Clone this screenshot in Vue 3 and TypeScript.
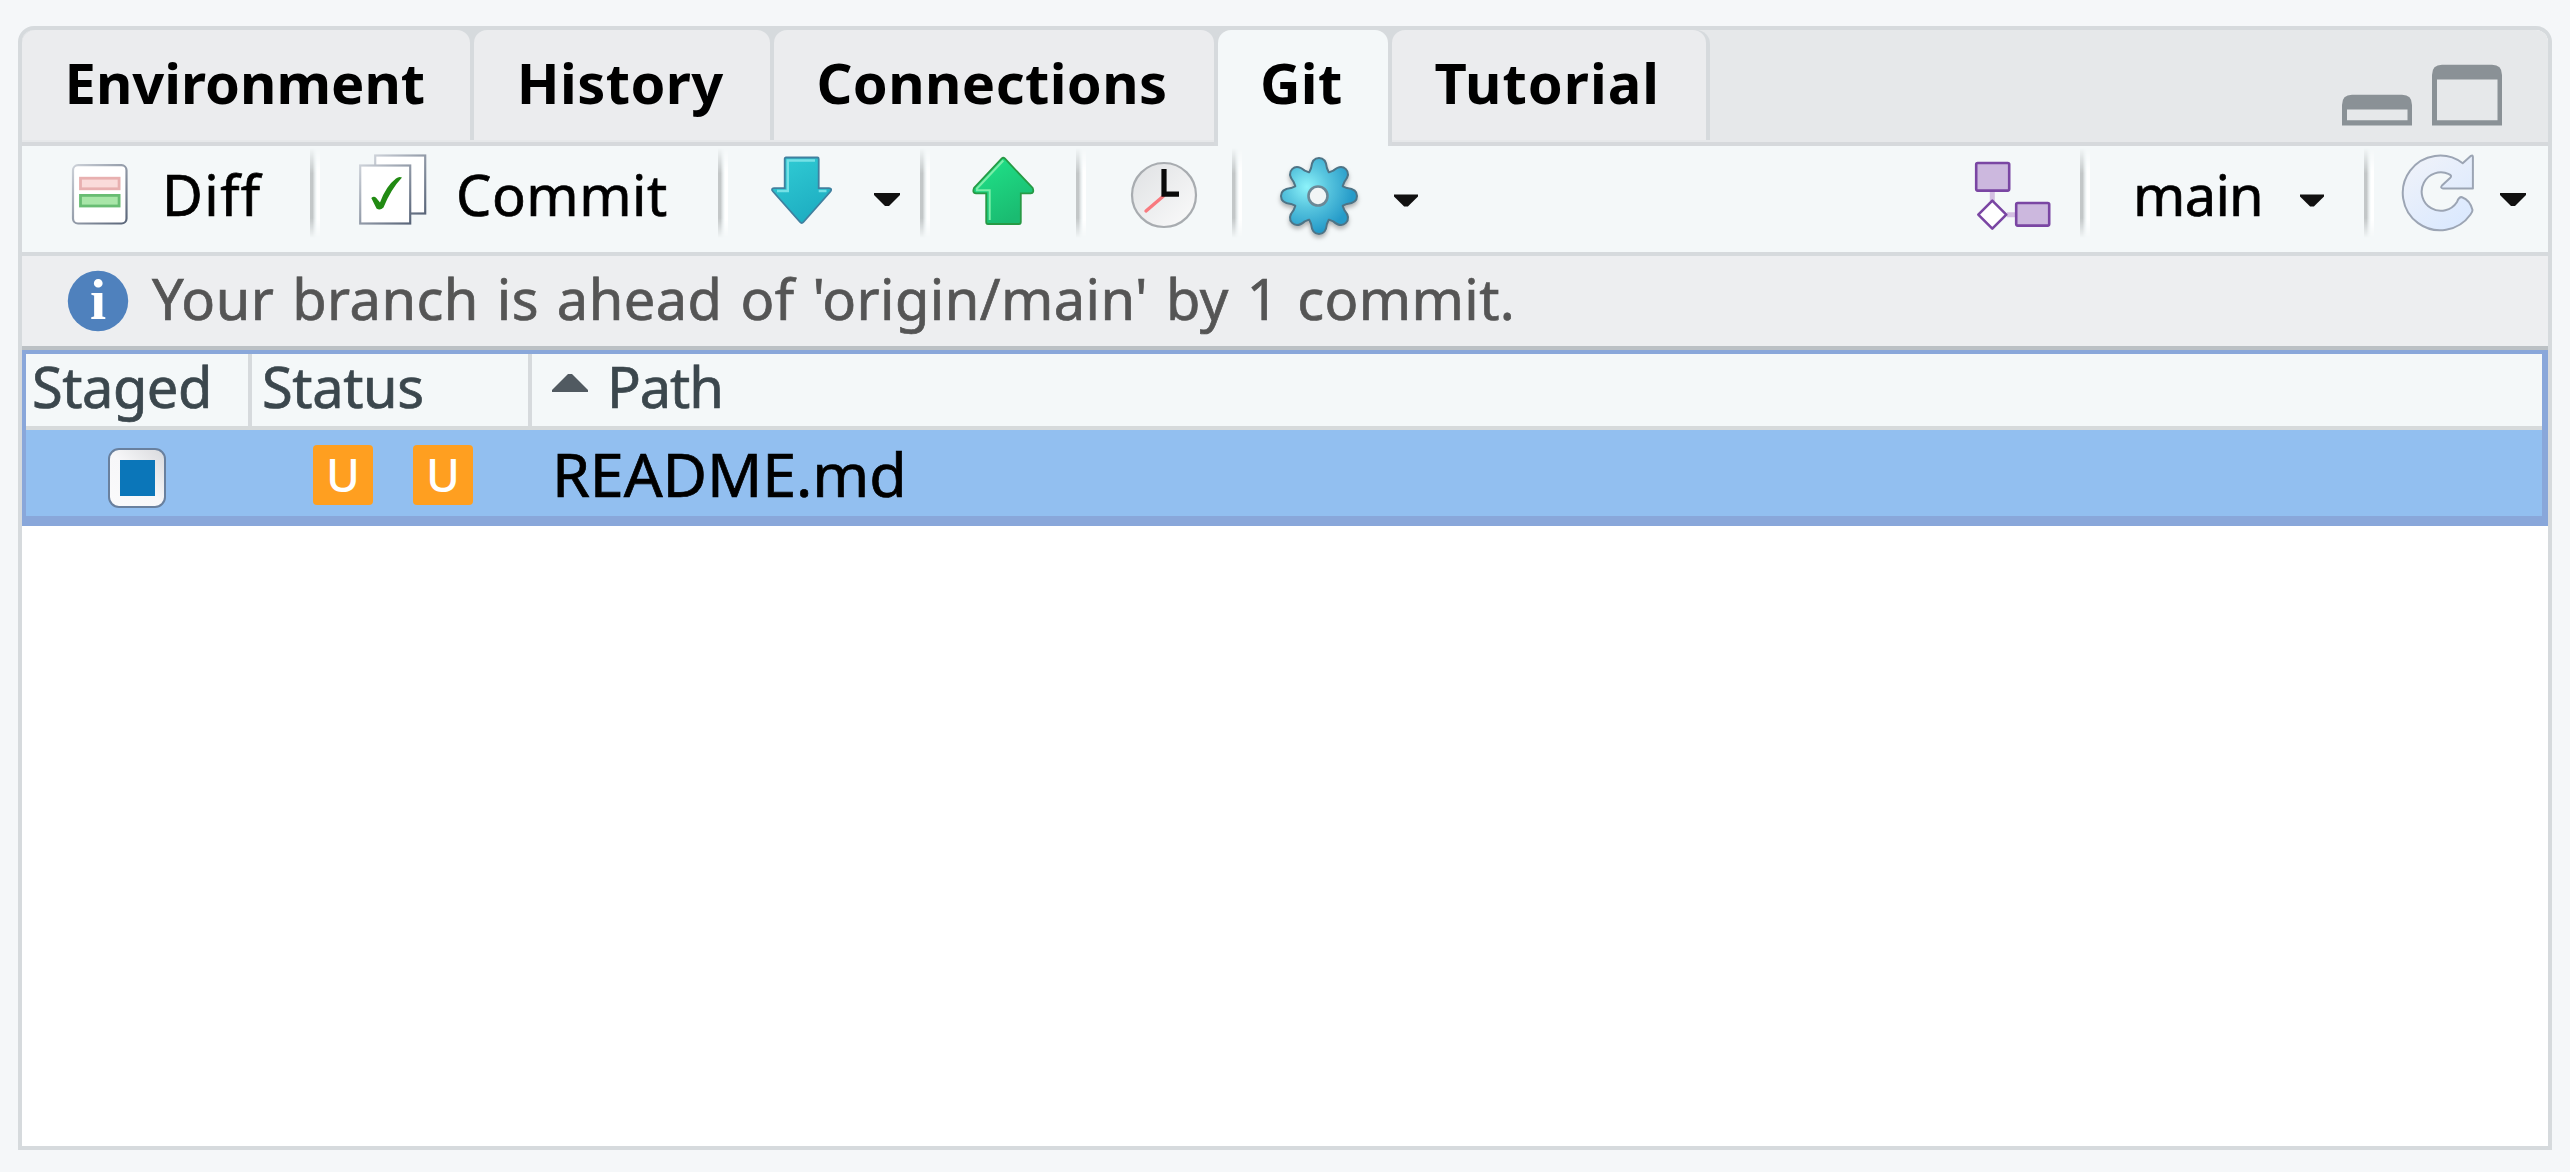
<script setup lang="ts">
interface Tab {
  label: string
  width: number
  indent: number
  spacing: number
  active?: boolean
}

interface ChangedFile {
  path: string
  status: string[]
}

const tabs: Tab[] = [
  { label: 'Environment', width: 448, indent: 42.6, spacing: 0 },
  { label: 'History', width: 296, indent: 42.8, spacing: 0.4 },
  { label: 'Connections', width: 440, indent: 42.5, spacing: 0.4 },
  { label: 'Git', width: 170, indent: 42, spacing: 0.3, active: true },
  { label: 'Tutorial', width: 314, indent: 42.4, spacing: 1.05 },
]

const files: ChangedFile[] = [{ path: 'README.md', status: ['U', 'U'] }]

// Outline of the eight-toothed gear, centred on the origin.
function gearPath(): string {
  const tooth: [number, number][] = [
    [-9.7, -23.8], [-7.9, -28], [-7, -38], [0, -38], [7, -38], [7.9, -28], [9.7, -23.8],
  ]
  let d = ''
  for (let i = 0; i < 8; i++) {
    const a = (i * Math.PI) / 4
    const p = tooth.map(([x, y]) => {
      const rx = x * Math.cos(a) - y * Math.sin(a)
      const ry = x * Math.sin(a) + y * Math.cos(a)
      return `${rx.toFixed(2)} ${ry.toFixed(2)}`
    })
    d += `${i === 0 ? 'M' : 'L'}${p[0]} L${p[1]} Q${p[2]} ${p[3]} Q${p[4]} ${p[5]} L${p[6]} `
  }
  return d + 'Z'
}
const gear = gearPath()
</script>

<template>
  <div class="page">
    <section class="panel">
      <header class="tabbar">
        <nav class="tabs">
          <div
            v-for="t in tabs"
            :key="t.label"
            class="tab"
            :class="{ active: t.active }"
            :style="{ width: t.width + 'px', paddingLeft: t.indent + 'px', letterSpacing: t.spacing + 'px' }"
          >{{ t.label }}</div>
        </nav>
        <div class="window-buttons">
          <svg width="70" height="32" viewBox="0 0 70 32">
            <path fill="#8a9196" fill-rule="evenodd" d="M0 31.5V11Q0 .8 10 .8H60Q70 .8 70 11V31.5ZM5 15.6V26.2H65.5V15.6Z" />
          </svg>
          <svg width="70" height="62" viewBox="0 0 70 62">
            <path fill="#8a9196" fill-rule="evenodd" d="M0 61.5V11Q0 .8 10 .8H60Q70 .8 70 11V61.5ZM5 15.6V56.2H65.5V15.6Z" />
          </svg>
        </div>
      </header>

      <div class="toolbar">
        <div class="cell diff">
          <svg class="icon" width="60" height="66" viewBox="70 161 60 66">
            <defs>
              <linearGradient id="page-edge" x1="0" y1="0" x2="1" y2="1">
                <stop offset="0" stop-color="#ccd1d8" />
                <stop offset="1" stop-color="#596579" />
              </linearGradient>
            </defs>
            <rect x="73" y="165.2" width="53.5" height="58.3" rx="5" fill="#fff" stroke="url(#page-edge)" stroke-width="2.2" />
            <rect x="80.5" y="178.2" width="38.6" height="10.6" fill="#fadbda" stroke="#e8b0b0" stroke-width="2.8" />
            <rect x="80.5" y="195.4" width="38.6" height="10.6" fill="#a8e6a8" stroke="#68bd73" stroke-width="2.8" />
          </svg>
          <span class="label">Diff</span>
        </div>
        <i class="sep" />
        <div class="cell commit">
          <svg class="icon" width="72" height="76" viewBox="357 152 72 76">
            <rect x="375.2" y="155.5" width="50" height="58" fill="#fff" stroke="url(#page-edge)" stroke-width="2.2" />
            <rect x="360.2" y="165.5" width="50" height="58" fill="#fff" stroke="url(#page-edge)" stroke-width="2.2" />
            <path d="M371.3 198Q374 195.5 376.3 198L380 202.5Q386 186 396 178.5Q399 176 402 177.5Q391 189 383.5 207.5Q380 211 376.5 208.5Z" fill="#218a12" />
          </svg>
          <span class="label">Commit</span>
        </div>
        <i class="sep" />
        <div class="cell pull">
          <svg class="icon" width="68" height="76" viewBox="0 0 68 76">
            <defs>
              <linearGradient id="pull" x1="0" y1="0" x2=".5" y2="1">
                <stop offset="0" stop-color="#31cdd5" />
                <stop offset="1" stop-color="#1eaec2" />
              </linearGradient>
            </defs>
            <path d="M18 5.5H49.5Q50.7 5.5 50.7 7V36.2H61Q64.5 36.5 62.5 39.5L35.5 70Q33.7 72 32 70L5 39.5Q2.5 36.5 6 36.2H16.7V7Q16.7 5.5 18 5.5Z" fill="url(#pull)" stroke="#40809f" stroke-width="1.8" />
            <path d="M47 8.5H19.8V39H9M50.7 39H58.5" fill="none" stroke="#75e1e6" stroke-width="2.4" />
          </svg>
          <svg class="caret" width="26" height="14" viewBox="0 0 26 14"><path d="M0 0H26V2L15 13H11L0 2Z" fill="#111" /></svg>
        </div>
        <i class="sep" />
        <div class="cell push">
          <svg class="icon" width="68" height="76" viewBox="0 0 68 76">
            <defs>
              <linearGradient id="push" x1="0" y1="0" x2=".5" y2="1">
                <stop offset="0" stop-color="#20e58a" />
                <stop offset="1" stop-color="#1abb71" />
              </linearGradient>
            </defs>
            <path d="M31.8 6.5Q33.3 5 34.8 6.5L62.7 36Q64.5 41 60.7 41.3H50.8V70Q50.8 72 49 72H18Q16.2 72 16.2 70V41.3H6Q2 41 4 36Z" fill="url(#push)" stroke="#279a45" stroke-width="1.8" />
            <path d="M33.3 8.5L7 36.5V38.3H19.7V68" fill="none" stroke="#7beea9" stroke-width="2" />
          </svg>
        </div>
        <i class="sep" />
        <div class="cell history">
          <svg class="icon" width="70" height="70" viewBox="-35 -35 70 70">
            <defs>
              <linearGradient id="clock" x1="0" y1="0" x2="1" y2="1">
                <stop offset="0" stop-color="#dfe1e3" />
                <stop offset="1" stop-color="#fbfbfb" />
              </linearGradient>
            </defs>
            <circle r="32" fill="url(#clock)" stroke="#a8acb0" stroke-width="2.2" />
            <path d="M-.5 1L-18 16" stroke="#f87a7f" stroke-width="3.4" stroke-linecap="round" />
            <path d="M0-26V-.8H15" fill="none" stroke="#0a0a0a" stroke-width="5.2" />
          </svg>
        </div>
        <i class="sep" />
        <div class="cell more">
          <svg class="icon" width="90" height="92" viewBox="-45 -43 90 92">
            <defs>
              <radialGradient id="gear" gradientUnits="userSpaceOnUse" cx="-12" cy="-9" r="46">
                <stop offset="0" stop-color="#8df3fa" />
                <stop offset=".45" stop-color="#59c6df" />
                <stop offset="1" stop-color="#269bc9" />
              </radialGradient>
            </defs>
            <g class="gear">
              <path :d="gear" fill="url(#gear)" stroke="#4e7486" stroke-width="2" stroke-linejoin="round" />
            </g>
            <circle cx="-1" r="9.5" fill="#f2f5f6" stroke="#6c8896" stroke-width="2.6" />
          </svg>
          <svg class="caret" width="24" height="14" viewBox="0 0 26 14"><path d="M0 0H26V2L15 13H11L0 2Z" fill="#111" /></svg>
        </div>
        <div class="cell branch-new">
          <svg class="icon" width="84" height="78" viewBox="0 0 84 78">
            <path d="M22.3 36V46M37 59.7H46" stroke="#d3bfe2" stroke-width="5" />
            <g stroke="#7a46a3" stroke-width="2.6">
              <rect x="6.2" y="8" width="33" height="27.6" rx="1.5" fill="#ccb8de" />
              <rect x="46.2" y="48" width="33" height="22.6" rx="1.5" fill="#ccb8de" />
              <path d="M22.3 45.7L36.3 59.7L22.3 73.7L8.3 59.7Z" fill="#fff" stroke-linejoin="round" />
            </g>
          </svg>
        </div>
        <i class="sep" />
        <div class="cell branch">
          <span class="label">main</span>
          <svg class="caret" width="24" height="14" viewBox="0 0 26 14"><path d="M0 0H26V2L15 13H11L0 2Z" fill="#111" /></svg>
        </div>
        <i class="sep" />
        <div class="cell refresh">
          <svg class="icon" width="76" height="84" viewBox="0 0 76 84">
            <defs>
              <linearGradient id="refresh" x1="0" y1="0" x2=".7" y2="1">
                <stop offset="0" stop-color="#f1f3f9" />
                <stop offset="1" stop-color="#dbe9fe" />
              </linearGradient>
            </defs>
            <path d="M61.7 13.3L70 5.8Q71.9 4.6 71.9 7V38.4H42Q39 38 41 35.5L49 28Q51.5 25.5 48 24.2A19.2 19.2 0 1 0 56 52Q58 46.5 61 47.2Q69 50 71.5 60Q71.5 62 69.5 64.5A37.3 37.3 0 1 1 61.7 13.3Z" fill="url(#refresh)" stroke="#9ca5b4" stroke-width="2" stroke-linejoin="round" />
          </svg>
          <svg class="caret" width="26" height="14" viewBox="0 0 26 14"><path d="M0 0H26V2L15 13H11L0 2Z" fill="#111" /></svg>
        </div>
      </div>

      <div class="info">
        <svg width="62" height="62" viewBox="-31 -31 62 62">
          <circle r="30.2" fill="#4f81bd" />
          <text class="info-mark" y="17.5" text-anchor="middle">i</text>
        </svg>
        <span>Your branch is ahead of 'origin/main' by 1 commit.</span>
      </div>

      <div class="grid">
        <div class="row head">
          <div class="col staged">Staged</div>
          <div class="col status">Status</div>
          <div class="col path">
            <svg width="36" height="18" viewBox="0 0 36 18"><path d="M16 0H20L36 16V18H0V16Z" fill="#515a61" /></svg>
            <span>Path</span>
          </div>
        </div>
        <div v-for="f in files" :key="f.path" class="row file">
          <div class="check"><i /></div>
          <div class="badges"><b v-for="(s, i) in f.status" :key="i">{{ s }}</b></div>
          <span class="name">{{ f.path }}</span>
        </div>
      </div>
    </section>
  </div>
</template>

<style>
body { margin: 0; background: #f5f7f9; }
</style>

<style scoped>
* { box-sizing: border-box; }
.page {
  width: 2570px;
  height: 1172px;
  padding: 26px 18px 22px;
  overflow: hidden;
  background: #f5f7f9;
  font: 400 56px/76px "Noto Sans", "Open Sans", sans-serif;
  color: #000;
  white-space: nowrap;
}
svg { display: block; flex: none; }
.panel {
  width: 2534px;
  height: 1124px;
  border: 4px solid #d6dadd;
  border-radius: 16px 16px 0 0;
  background: #fff;
  display: flex;
  flex-direction: column;
}
.tabbar {
  height: 116px;
  flex: none;
  display: flex;
  justify-content: space-between;
  background: #e6e8ea;
  border-bottom: 4px solid #d6d9dc;
  border-radius: 12px 12px 0 0;
}
.tabs {
  display: flex;
  gap: 4px;
  height: 110px;
  padding-right: 4px;
  background: #d6dadd;
  border-radius: 12px 14px 0 0;
}
.tab {
  height: 110px;
  padding-top: 14px;
  background: #ebecee;
  border-radius: 13px 13px 0 0;
  font-weight: 700;
}
.tab.active {
  height: 116px;
  background: #f4f8f9;
  box-shadow: -4px 0 #d6dadd, 4px 0 #d6dadd;
}
.window-buttons {
  display: flex;
  align-items: flex-end;
  gap: 20px;
  height: 96px;
  padding-right: 46px;
}
.toolbar {
  height: 110px;
  flex: none;
  display: flex;
  background: #f4f8f9;
  border-bottom: 4px solid #d6dadd;
}
.cell { display: flex; align-items: flex-start; flex: none; }
.label { margin-top: 10px; }
.label, .info span, .head, .name { -webkit-text-stroke: .7px currentColor; }
.sep {
  flex: none;
  width: 10px;
  height: 90px;
  margin-top: 2px;
  background: linear-gradient(90deg, #c3c7c8 0 25%, #e2e6e7 45%, #f4f8f9 60%, #fff 72% 100%);
  -webkit-mask-image: linear-gradient(transparent, #000 28%, #000 78%, transparent);
  mask-image: linear-gradient(transparent, #000 28%, #000 78%, transparent);
}
.caret { margin-top: 47px; }
.diff { width: 288px; padding-left: 48px; }
.diff .icon { margin-top: 15px; }
.diff .label { margin-left: 32px; letter-spacing: 1.4px; }
.commit { width: 398px; padding-left: 37px; }
.commit .icon { margin-top: 6px; }
.commit .label { margin-left: 27px; letter-spacing: .5px; }
.pull { width: 192px; padding-left: 40px; }
.pull .icon, .push .icon { margin-top: 6px; }
.pull .caret { margin-left: 38px; }
.push { width: 146px; padding-left: 40px; }
.history { width: 146px; padding-left: 43px; }
.history .icon { margin-top: 14px; }
.more { flex: 1; padding-left: 32px; }
.more .icon { margin-top: 7px; }
.more .caret { margin-left: 30px; margin-top: 48px; }
.gear { filter: drop-shadow(0 3px 2px rgba(0, 0, 0, .28)); }
.branch-new { width: 110px; }
.branch-new .icon { margin-top: 9px; }
.branch { width: 274px; padding-left: 43px; }
.branch .label { width: 167px; letter-spacing: -.7px; }
.branch .caret { margin-top: 48px; }
.refresh { width: 174px; padding-left: 27px; }
.refresh .icon { margin-top: 4px; }
.refresh .caret { margin-left: 23px; }
.info {
  height: 94px;
  flex: none;
  display: flex;
  align-items: flex-start;
  padding: 4px 0 0 45px;
  background: #edeef0;
  border-bottom: 4px solid #bbc0c4;
  color: #555;
}
.info svg { margin-top: 10px; }
.info span { margin-left: 23px; letter-spacing: .43px; word-spacing: 3px; }
.info-mark { font: 700 58px "Liberation Serif", serif; fill: #fff; }
.grid {
  flex: none;
  border: solid #89a7da;
  border-width: 4px 6px 10px 4px;
}
.row { display: flex; }
.head {
  height: 76px;
  line-height: 65px;
  background: #f4f8f9;
  border-bottom: 4px solid #d6dadb;
  color: #3b474d;
}
.col { height: 72px; }
.col.staged { width: 226px; padding-left: 6px; border-right: 4px solid #d6dadd; letter-spacing: -.5px; }
.col.status { width: 280px; padding-left: 10px; border-right: 4px solid #d6dadd; letter-spacing: -.4px; }
.col.path { display: flex; padding-left: 20px; letter-spacing: -1.1px; }
.col.path svg { margin-top: 20px; }
.col.path span { margin-left: 19px; }
.file { height: 86px; background: #92bff0; }
.check {
  width: 58px;
  height: 60px;
  margin: 18px 0 0 82px;
  padding: 10px;
  flex: none;
  border: 2px solid #69809e;
  border-radius: 11px;
  background: linear-gradient(225deg, #d9dadd, #f7f7f9 50%, #fafafb);
}
.check i { display: block; width: 35px; height: 36px; background: #0b76b9; }
.badges { display: flex; gap: 40px; width: 239px; margin: 15px 0 0 147px; flex: none; }
.badges b {
  width: 60px;
  height: 60px;
  border-radius: 4px;
  background: #ff9f20;
  color: #fff;
  font: 500 46px/59px "Noto Sans", sans-serif;
  text-align: center;
}
.name { font-size: 61px; line-height: 88px; letter-spacing: -.1px; }
</style>
